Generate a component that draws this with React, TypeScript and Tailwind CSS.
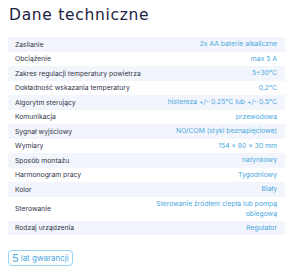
import React from "react";

const rows: [string, React.ReactNode][] = [
  ["Zasilanie", "2x AA baterie alkaliczne"],
  ["Obciążenie", "max 5 A"],
  ["Zakres regulacji temperatury powietrza", "5÷30°C"],
  ["Dokładność wskazania temperatury", "0,2°C"],
  ["Algorytm sterujący", "histereza +/- 0,25°C lub +/- 0,5°C"],
  ["Komunikacja", "przewodowa"],
  ["Sygnał wyjściowy", "NO/COM (styki beznapięciowe)"],
  ["Wymiary", "154 x 80 x 30 mm"],
  ["Sposób montażu", "natynkowy"],
  ["Harmonogram pracy", "Tygodniowy"],
  ["Kolor", "Biały"],
  [
    "Sterowanie",
    <>
      Sterowanie źródłem ciepła lub pompą
      <br />
      obiegową
    </>,
  ],
  ["Rodzaj urządzenia", "Regulator"],
];

export default function App() {
  return (
    <div
      className="w-[300px] h-[272px] bg-white overflow-hidden"
      style={{ fontFamily: "Inter, 'Noto Sans', sans-serif" }}
    >
      <h1
        className="pl-[9px] pt-[5px] text-[15.5px] leading-[20px] text-[#1b2140] font-normal tracking-[0.7px]"
        style={{ fontFamily: "'DejaVu Sans', sans-serif" }}
      >
        Dane techniczne
      </h1>
      <div className="mt-[12px] mx-[8px] w-[277px]">
        {rows.map(([k, v], i) => (
          <div
            key={i}
            className={`grid grid-cols-2 items-center ${
              i % 2 === 0 ? "bg-[#f2f5fb]" : "bg-white"
            } ${i === 11 ? "h-[24px]" : "h-[14.5px]"}`}
          >
            <div className="pl-[7px] text-[6.8px] leading-[9px] text-[#33374a] whitespace-nowrap">
              {k}
            </div>
            <div className="pr-[8px] text-right text-[6.8px] leading-[10px] text-[#4aa8df] whitespace-nowrap">
              {v}
            </div>
          </div>
        ))}
      </div>
      <div className="mt-[15px] ml-[8px] inline-flex items-center h-[16px] px-[3px] border border-[#95d3f0] rounded-[4px] text-[#4aa8df]">
        <span className="text-[11px] leading-[12px] mr-[2px]">5</span>
        <span className="text-[8px] leading-[10px]">lat gwarancji</span>
      </div>
    </div>
  );
}
